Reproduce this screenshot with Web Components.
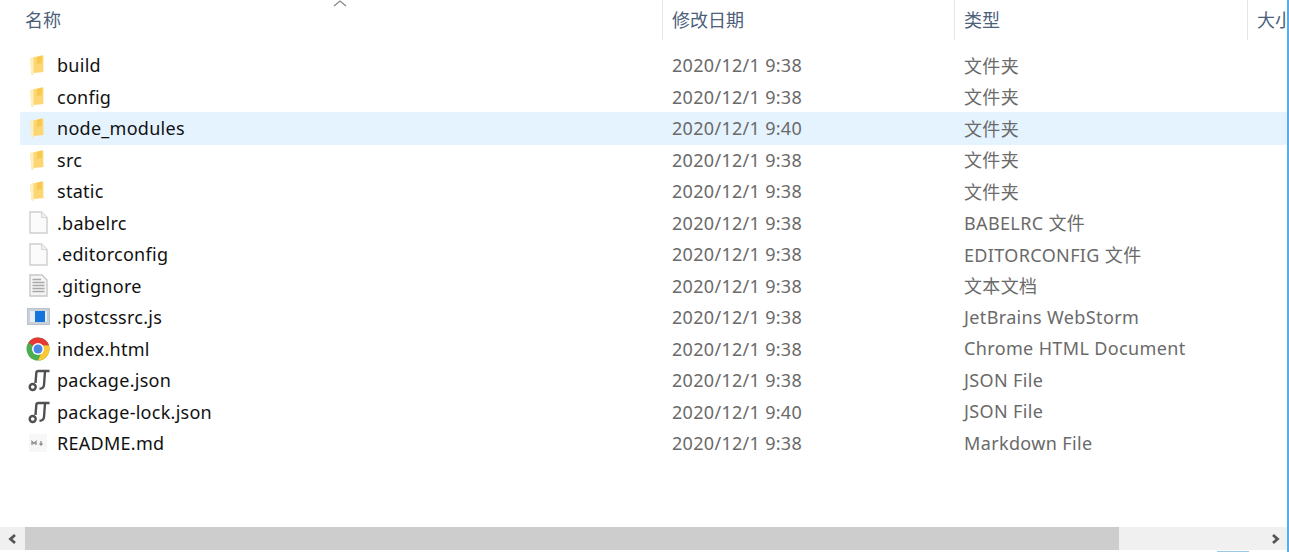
<!DOCTYPE html>
<html><head><meta charset="utf-8"><title>Explorer</title>
<style>
html,body{margin:0;padding:0;background:#fff;overflow:hidden;height:552px}
body{width:1289px}
</style></head>
<body>
<file-list></file-list>
<template id="t-row">
<style>
:host{display:grid;grid-template-columns:652px 292px 1fr;height:33px;margin-bottom:-1.5px;margin-left:20px;align-items:center;position:relative}
:host([hot]){background:#e5f3ff}
.name{display:flex;align-items:center;color:#111;letter-spacing:.27px}
.ic{width:37px;padding-left:6px;box-sizing:border-box;display:flex;align-items:center;height:24px;filter:blur(.45px)}
.d,.t{color:#6a6a6a}
.d{letter-spacing:.3px}
.t{letter-spacing:.36px;padding-bottom:1px}
</style>
<div class="name"><span class="ic"><slot name="icon"></slot></span><span><slot name="n"></slot></span></div>
<div class="d"><slot name="d"></slot></div>
<div class="t"><slot name="t"></slot></div>
</template>
<script>
const ICONS={
folder:'<svg style="margin-left:3px" width="16" height="22" viewBox="0 0 16 22"><path d="M1 4 L13 1.500 L14.500 1.500 V16.500 L15 18 L5 19 L4 21 L2.500 20.500 Z" fill="#fce29a"/><path d="M5 3.500 L13 1.500 L14 2 V18 L5 18.500 Z" fill="#fbd672"/><path d="M8 3 L13 1.500 V9 L8 10Z" fill="#f8c94e"/><path d="M1 4 H4 V20 L2.500 20.500Z" fill="#feeec0"/></svg>',
blank:'<svg style="margin-left:2.500px" width="19" height="23" viewBox="0 0 19 23"><path d="M1 1H12.500L18 6.500V22H1Z" fill="#fbfbfb" stroke="#cfcfcf" stroke-width="1.400"/><path d="M12.500 1V6.500H18" fill="#f0f0f0" stroke="#d4d4d4"/></svg>',
text:'<svg style="margin-left:2.500px" width="19" height="23" viewBox="0 0 19 23"><path d="M1 1H13L18 6V22H1Z" fill="#f4f4f4" stroke="#c8c8c8" stroke-width="1.400"/><path d="M3.500 5.500H12M3.500 8.500H15.500M3.500 11.500H15.500M3.500 14.500H15.500M3.500 17.500H15.500" stroke="#a8a8a8" stroke-width="1.300"/></svg>',
ws:'<svg style="margin-left:1px" width="23" height="18" viewBox="0 0 23 18"><rect x="0.500" y="0.500" width="22" height="16" fill="#c9d0da" stroke="#bcc2cb"/><rect x="3" y="3" width="17" height="11" fill="#e8edf3"/><rect x="8" y="3" width="10" height="11" fill="#1473dd"/></svg>',
chrome:'<svg width="24" height="24" viewBox="0 0 24 24"><circle cx="12" cy="12" r="11.500" fill="#4cae50"/><path d="M12 12 L2.400 5.800 A11.500 11.500 0 0 1 23 8.500 L12 8.500Z" fill="#e53935"/><path d="M12 23.500 A11.500 11.500 0 0 0 23 8.500 L12 8.500 L16 14.500 Z" fill="#fcc934"/><circle cx="12" cy="12" r="6" fill="#fff"/><circle cx="12" cy="12" r="4.500" fill="#4a86e8"/></svg>',
json:'<svg style="margin-left:2px" width="23" height="24" viewBox="0 0 23 24"><g fill="none" stroke="#505050" stroke-width="2.400"><path d="M7.500 15 L8.300 5 Q8.500 3 10.500 3 H21.500"/><path d="M17 3.500 L16 17 Q15.700 20.500 11.500 20.800"/><circle cx="4.700" cy="19" r="3"/></g></svg>',
md:'<svg style="margin-left:2px" width="20" height="20" viewBox="0 0 20 20"><rect x="1" y="1" width="18" height="18" fill="#f7f7f7"/><path d="M4 12V8.500L6 10.500L8 8.500V12M13 8V12M11.500 10.500L13 12L14.500 10.500" fill="none" stroke="#8e8e8e" stroke-width="1.300"/></svg>'
};
const ROWS=[
['folder','build','2020/12/1 9:38','文件夹'],
['folder','config','2020/12/1 9:38','文件夹'],
['folder','node_modules','2020/12/1 9:40','文件夹',1],
['folder','src','2020/12/1 9:38','文件夹'],
['folder','static','2020/12/1 9:38','文件夹'],
['blank','.babelrc','2020/12/1 9:38','BABELRC 文件'],
['blank','.editorconfig','2020/12/1 9:38','EDITORCONFIG 文件'],
['text','.gitignore','2020/12/1 9:38','文本文档'],
['ws','.postcssrc.js','2020/12/1 9:38','JetBrains WebStorm'],
['chrome','index.html','2020/12/1 9:38','Chrome HTML Document'],
['json','package.json','2020/12/1 9:38','JSON File'],
['json','package-lock.json','2020/12/1 9:40','JSON File'],
['md','README.md','2020/12/1 9:38','Markdown File']
];
class FileRow extends HTMLElement{
  constructor(){super();this.attachShadow({mode:'open'}).appendChild(document.getElementById('t-row').content.cloneNode(true));}
}
customElements.define('file-row',FileRow);
class FileHeader extends HTMLElement{
  constructor(){super();this.attachShadow({mode:'open'}).innerHTML=`<style>
  :host{display:grid;grid-template-columns:662px 292px 293px 1fr;height:40px;color:#4c607a;position:relative}
  div{display:flex;align-items:center;height:40px;box-sizing:border-box;overflow:hidden;white-space:nowrap;padding-bottom:2px}
  div+div{border-left:1px solid #e5e5e5;padding-left:9px}
  div:first-of-type{padding-left:25px}
  svg{position:absolute;left:333px;top:0}
  </style><div><span>名称</span></div><div><span>修改日期</span></div><div><span>类型</span></div><div><span>大小</span></div>
  <svg width="14" height="7" viewBox="0 0 14 7"><path d="M1 6 L7 1 L13 6" fill="none" stroke="#8a8a8a" stroke-width="1.300"/></svg>`;}
}
customElements.define('file-header',FileHeader);
class HScroll extends HTMLElement{
  constructor(){super();this.attachShadow({mode:'open'}).innerHTML=`<style>
  :host{display:flex;height:23px;background:#f0f0f0;align-items:stretch}
  .b{width:25px;display:flex;align-items:center;justify-content:center}
  .track{flex:1;display:flex}
  .thumb{width:1094px;background:#cdcdcd}
  </style><div class="b"><svg width="12" height="12" viewBox="0 0 12 12"><path d="M8 2L3.500 6L8 10" fill="none" stroke="#555" stroke-width="2.800"/></svg></div>
  <div class="track"><div class="thumb"></div></div>
  <div class="b"><svg width="12" height="12" viewBox="0 0 12 12"><path d="M4 2L8.500 6L4 10" fill="none" stroke="#555" stroke-width="2.800"/></svg></div>`;}
}
customElements.define('h-scroll',HScroll);
class FileList extends HTMLElement{
  constructor(){super();const s=this.attachShadow({mode:'open'});
  s.innerHTML=`<style>
  :host{display:flex;flex-direction:column;width:1289px;height:552px;box-sizing:border-box;border-right:2px solid #55aeea;font:18px "Noto Sans","Noto Sans CJK SC",sans-serif;overflow:hidden;position:relative}
  .rows{padding-top:8.500px;flex:1;min-height:0}
  h-scroll{margin-bottom:2px}
  .tick{position:absolute;left:1217px;width:32px;bottom:0;height:1px;background:#9cc8e8}
  </style><file-header></file-header><div class="rows"></div><h-scroll></h-scroll><div class="tick"></div>`;
  const box=s.querySelector('.rows');
  for(const r of ROWS){const e=document.createElement('file-row');if(r[4])e.setAttribute('hot','');
    e.innerHTML='<span slot="icon" style="display:flex">'+ICONS[r[0]]+'</span><span slot="n"></span><span slot="d"></span><span slot="t"></span>';
    e.children[1].textContent=r[1];e.children[2].textContent=r[2];e.children[3].textContent=r[3];box.appendChild(e);}
  }
}
customElements.define('file-list',FileList);
</script>
</body></html>
